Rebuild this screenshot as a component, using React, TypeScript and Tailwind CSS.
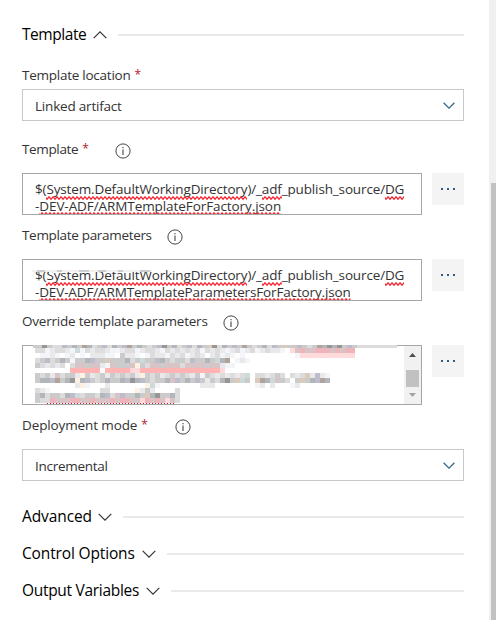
import type { ReactNode } from "react";

const palette: Record<string, string> = {
  a: "#f4f5f8", b: "#e9e9eb", c: "#dcdcdc", d: "#cbcbcb", e: "#b2b6ba",
  f: "#969696", g: "#bcbccb", h: "#dacbbb", i: "#d8c4c7", j: "#ffb3b3",
  k: "#ffdada", l: "#eeb4b9", m: "#ccdada", n: "#b0a39c", o: "#fdf1e2",
};

// Each character is one 5px cell of the redacted value.
const mosaic: { y: number; h: number; cells: string }[] = [
  { y: 0, h: 3, cells: "ddfdccgdednecdgcedgndedcdgfdecdgcedhfcedgdndcdecgdhdigdcdnefefdgdcccccccc" },
  { y: 3, h: 5, cells: "ccabccbamacbccbaabccabccbacbcbcbcacbcbabcabcabcbba.kiliilllilill" },
  { y: 8, h: 5, cells: ".aaba.ab.a.bbbaa.dbba.acbbacbcabcb.bcaba.a..........akkkkkkkkkkk" },
  { y: 13, h: 5, cells: "cdgcdedaddegddhdddecdmddgedcddcgddedmen.aba" },
  { y: 18, h: 5, cells: "dcbcbc.ciidiibaidddiodciidiiiciiiidiibaa" },
  { y: 23, h: 5, cells: ".......jjjjjj.jjjjjkkjjjjjjjjjjjjjjjjk" },
  { y: 28, h: 5, cells: "dcdbicddbodbcdbdcdcdbodcdbcdcdcbdadcbcbcbcm.ccbcdc.cbchbgba" },
  { y: 33, h: 5, cells: "deegndefoegdcdeddegfegdcddeigdedgdbdcefdhmd.hnemidc.dhdegne" },
  { y: 38, h: 5, cells: "........boa...b.......oma........bbb........ab.b...ab" },
  { y: 43, h: 5, cells: "cba..........cc.....obdb....c" },
  { y: 48, h: 5, cells: "decddcegmcddcegcigddedhefddec" },
  { y: 53, h: 5, cells: "dccliiilliiliiililliiklilikic" },
];

function Redacted() {
  return (
    <svg width="380" height="59" className="block" shapeRendering="crispEdges">
      {mosaic.map((row, r) =>
        [...row.cells].map((c, i) =>
          c === "." ? null : (
            <rect
              key={`${r}-${i}`}
              x={r === 0 ? i * 5 - 1 : i * 5 + 2}
              y={row.y}
              width="5"
              height={row.h}
              fill={palette[c]}
            />
          ),
        ),
      )}
      <path d="M14 58.5H142" stroke="#e81123" strokeDasharray="1 2" />
    </svg>
  );
}

function Chevron({ up = false, small = false }: { up?: boolean; small?: boolean }) {
  return (
    <svg
      width={small ? 12 : 14}
      height={small ? 7 : 8}
      viewBox="0 0 14 8"
      fill="none"
      stroke={small ? "#336b94" : "#333"}
      strokeWidth={small ? 1.5 : 1.2}
      className="shrink-0"
    >
      <path d={up ? "M.7 7.2 7 .9l6.3 6.3" : "M.7.8 7 7.1 13.3.8"} />
    </svg>
  );
}

function Info() {
  return (
    <svg width="16" height="16" viewBox="0 0 16 16" fill="none" stroke="#444" className="mt-1 shrink-0">
      <circle cx="8" cy="8" r="7.1" />
      <path d="M8 6.5V12M8 4v1.3" strokeWidth="1.1" />
    </svg>
  );
}

function Squiggle({ children, id, low = false }: { children: ReactNode; id: string; low?: boolean }) {
  return (
    <span className="relative inline-block">
      {children}
      <svg className={`absolute left-0 h-[4px] w-full ${low ? "top-[14px]" : "top-[15px]"}`}>
        <defs>
          <pattern id={id} width="4" height="4" patternUnits="userSpaceOnUse">
            <path d="M-1 0 1 3 3 .5 5 3" transform={low ? "translate(0 .3)" : "translate(0 .3)"} fill="none" stroke="#f52a35" strokeWidth="1.3" />
          </pattern>
        </defs>
        <rect width="100%" height="4" fill={`url(#${id})`} />
      </svg>
    </span>
  );
}

function Section({ title, width, tracking, up = false }: { title: string; width: string; tracking: string; up?: boolean }) {
  return (
    <div className="flex h-[37px] items-center text-[15.5px] text-black">
      <span className={`${width} ${tracking} shrink-0 whitespace-nowrap`}>{title}</span>
      <Chevron up={up} />
      <span className="ml-[11px] h-[2px] grow bg-[#eaeaea]" />
    </div>
  );
}

function Label({ text, width, tracking, required = false, info = false }: { text: string; width: string; tracking: string; required?: boolean; info?: boolean }) {
  return (
    <div className="flex h-[28px] items-start leading-[20px] text-[#333]">
      <span className={`${width} flex shrink-0 whitespace-nowrap`}>
        <span className={tracking}>{text}</span>
        {required && <span className="ml-1 text-[12px] text-[#b3202c]">*</span>}
      </span>
      {info && <Info />}
    </div>
  );
}

function Select({ value, tracking }: { value: string; tracking: string }) {
  return (
    <div className="flex h-8 items-center justify-between border border-[#c8c8c8] pl-3 pr-2">
      <span className={`${tracking} mt-[3px]`}>{value}</span>
      <Chevron small />
    </div>
  );
}

function More() {
  return (
    <button className="flex size-8 shrink-0 items-center justify-center gap-1 bg-[#f4f4f4]">
      <i className="size-[2px] bg-[#355c7d]" />
      <i className="size-[2px] bg-[#355c7d]" />
      <i className="size-[2px] bg-[#355c7d]" />
    </button>
  );
}

function PathInput({ id, file, tracking, torn = false }: { id: string; file: string; tracking: string; torn?: boolean }) {
  return (
    <div className="flex gap-[10px]">
      <div className="relative h-[42px] w-[400px] overflow-hidden whitespace-nowrap border border-[#a6a6a6] pl-3 pt-[7px] leading-[17px]">
        <div className="h-[17px] tracking-[-0.14px]">
          $(<Squiggle id={`${id}1`}>System.DefaultWorkingDirectory</Squiggle>)/_<Squiggle id={`${id}2`}>adf</Squiggle>_publish_source/<Squiggle id={`${id}3`}>DG</Squiggle>
        </div>
        <div className={`h-[17px] ${tracking}`}>
          -<Squiggle id={`${id}4`} low>{file}</Squiggle>
        </div>
        {torn && (
          <svg className="absolute left-[9px] top-[10px]" width="120" height="2" shapeRendering="crispEdges">
            <path d="M0 1H120" stroke="#f3f0ee" strokeWidth="2" />
            <path d="M5 1H120" stroke="#c9ced4" strokeWidth="2" strokeDasharray="8 12 5 17 10 9" />
          </svg>
        )}
      </div>
      <More />
    </div>
  );
}

export default function App() {
  return (
    <div className="flex h-[620px] w-[496px] justify-between overflow-hidden bg-white font-['Open_Sans','Noto_Sans',sans-serif] text-[13.5px] text-[#333]">
      <main className="ml-[22px] w-[442px] pt-[16px]">
        <Section title="Template" width="w-[71px]" tracking="tracking-[-0.45px]" up />
        <div className="h-3" />
        <div className="h-6">
          <Label text="Template location" width="w-[130px]" tracking="tracking-[-0.25px]" required />
        </div>
        <Select value="Linked artifact" tracking="tracking-[-0.2px]" />
        <div className="mt-[18px] h-[34px]">
          <Label text="Template" width="w-[93px]" tracking="tracking-[-0.35px]" required info />
        </div>
        <PathInput id="template" file="DEV-ADF/ARMTemplateForFactory.json" tracking="tracking-[-0.08px]" />
        <div className="mt-[10px] h-[34px]">
          <Label text="Template parameters" width="w-[145px]" tracking="tracking-[-0.32px]" info />
        </div>
        <PathInput id="params" file="DEV-ADF/ARMTemplateParametersForFactory.json" tracking="tracking-[-0.14px]" torn />
        <div className="mt-[10px] h-[34px]">
          <Label text="Override template parameters" width="w-[200.5px]" tracking="tracking-[-0.22px]" info />
        </div>
        <div className="flex gap-[10px]">
          <div className="relative flex h-[60px] w-[400px] justify-end border border-[#a6a6a6]">
            <div className="absolute -top-px left-[10px]">
              <Redacted />
            </div>
            <div className="flex w-[17px] flex-col items-center bg-[#f1f1f1]">
              <svg width="7" height="4" className="mt-[7px]"><path d="M0 4 3.5 0 7 4" fill="#505050" /></svg>
              <span className="mt-[13px] h-[17px] w-[13px] bg-[#c1c1c1]" />
              <svg width="7" height="4" className="mt-[6px]"><path d="M0 0 3.5 4 7 0" fill="#a3a3a3" /></svg>
            </div>
          </div>
          <More />
        </div>
        <div className="mt-[10px] h-[34px]">
          <Label text="Deployment mode" width="w-[152.5px]" tracking="tracking-[-0.12px]" required info />
        </div>
        <Select value="Incremental" tracking="tracking-[-0.28px]" />
        <div className="h-[17px]" />
        <Section title="Advanced" width="w-[76px]" tracking="tracking-[-0.1px]" />
        <Section title="Control Options" width="w-[120px]" tracking="tracking-[-0.15px]" />
        <Section title="Output Variables" width="w-[124px]" tracking="tracking-[-0.3px]" />
      </main>
      <aside className="w-[7px] bg-[#f0f0f0] pl-[2px] pt-[183px]">
        <div className="h-full bg-[#c1c1c1]" />
      </aside>
    </div>
  );
}
